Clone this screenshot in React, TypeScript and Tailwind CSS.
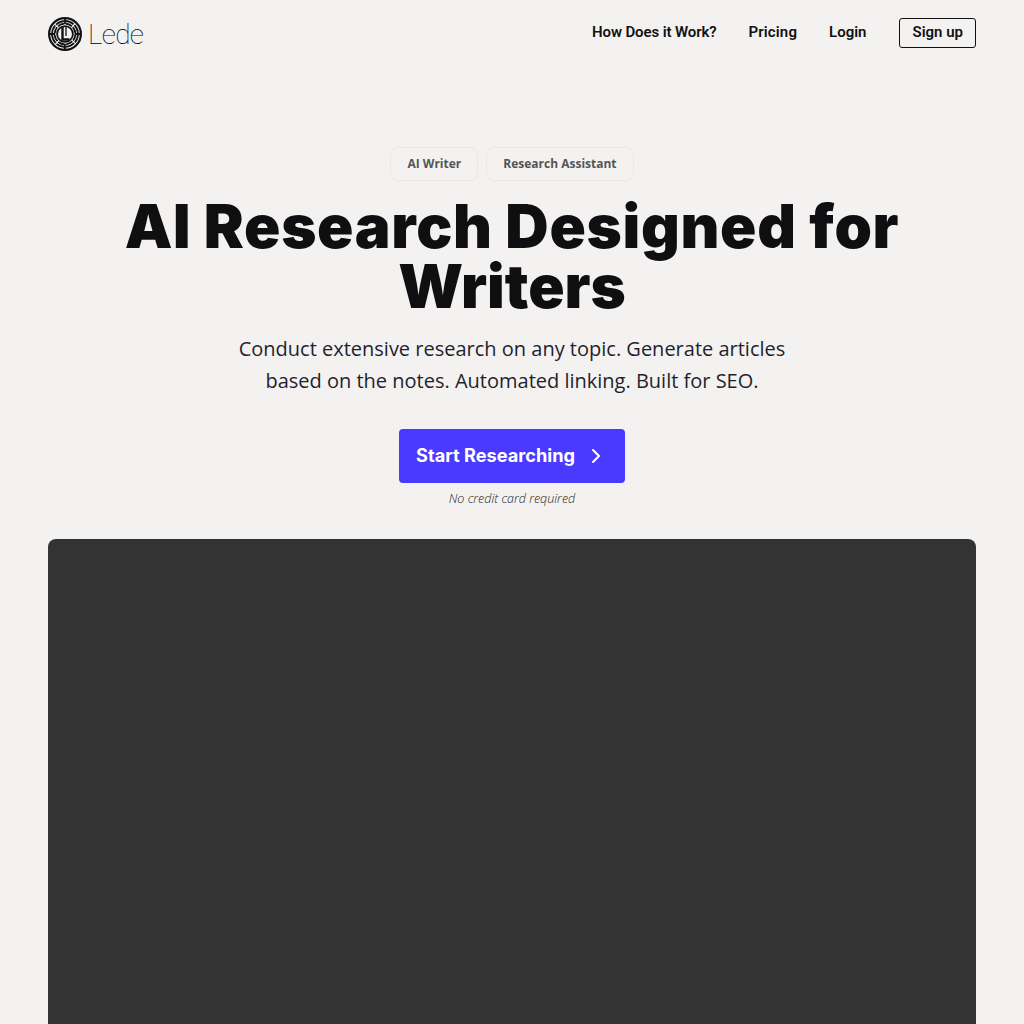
import { ChevronRight } from 'lucide-react';

function LedeMark() {
  return (
    <svg width="34" height="34" viewBox="0 0 34 34" fill="none" stroke="#111" aria-hidden="true">
      <circle cx="17" cy="17" r="15.9" strokeWidth="2.2" />
      <circle cx="17" cy="17" r="13" strokeWidth="1.8" strokeDasharray="9 1.2" />
      <circle cx="17" cy="17" r="10.4" strokeWidth="1.8" strokeDasharray="7 1.2" />
      <circle cx="17" cy="17" r="7.9" strokeWidth="1.8" />
      <path d="M17 1v6M17 27v6M1 17h6M27 17h6" strokeWidth="1.8" />
      <path d="M14.5 10v12.5h7" strokeWidth="2.4" />
      <path d="M18 10v9" strokeWidth="1.3" />
    </svg>
  );
}

export default function App() {
  return (
    <div className="min-h-screen h-[1024px] overflow-hidden bg-[#f3f2f1] px-12">
      <header className="flex items-center justify-between h-[68px]">
        <div className="flex items-center gap-[6px]">
          <LedeMark />
          <span
            className="pt-[2px] text-[28px] leading-none font-thin text-black tracking-[-0.7px]"
            style={{ fontFamily: "Roboto, sans-serif" }}
          >
            Lede
          </span>
        </div>
        <nav
          className="flex items-center gap-8 text-[15px] font-semibold text-[#111] -mt-[2px]"
          style={{ fontFamily: "Roboto, sans-serif" }}
        >
          <a className="tracking-[-0.12px] pb-[2px]">How Does it Work?</a>
          <a className="tracking-[0.15px] pb-[2px]">Pricing</a>
          <a className="pb-[2px] mr-px">Login</a>
          <a className="border border-[#111] rounded-[3px] px-3 pb-[2px] h-[30px] flex items-center">Sign up</a>
        </nav>
      </header>

      <main className="flex flex-col items-center pt-[79px]">
        <div className="flex gap-2" style={{ fontFamily: "'Open Sans', sans-serif" }}>
          <span className="h-[34px] px-4 flex items-center rounded-lg border border-[#e9e8e6] text-xs font-bold text-[#555]">AI Writer</span>
          <span className="h-[34px] px-4 flex items-center rounded-lg border border-[#e9e8e6] text-xs font-bold text-[#555]">Research Assistant</span>
        </div>

        <h1
          className="mt-[15px] text-center text-[60px] leading-[60px] font-black text-[#0f0f11] w-[800px]"
          style={{ fontFamily: "Inter, sans-serif" }}
        >
          <span className="tracking-[0.7px]">AI Research Designed for</span> Writers
        </h1>

        <p
          className="mt-[17px] text-center text-[20px] leading-[32px] text-[#1f1f2e] w-[600px]"
          style={{ fontFamily: "'Open Sans', sans-serif" }}
        >
          Conduct extensive research on any topic. Generate articles based on the notes. Automated linking. Built for SEO.
        </p>

        <button
          className="mt-[32px] h-[54px] w-[226px] pb-px rounded-[4px] bg-[#4a3aff] text-white text-[18.2px] font-bold flex items-center justify-center gap-[9px]"
          style={{ fontFamily: "Inter, sans-serif" }}
        >
          Start Researching
          <ChevronRight size={24} />
        </button>
        <p
          className="mt-2 text-[12.5px] leading-[16px] italic font-light text-[#222]"
          style={{ fontFamily: "'Open Sans', sans-serif" }}
        >
          No credit card required
        </p>

        <div className="mt-[32px] w-full h-[600px] rounded-lg bg-[#333333]" />
      </main>
    </div>
  );
}
